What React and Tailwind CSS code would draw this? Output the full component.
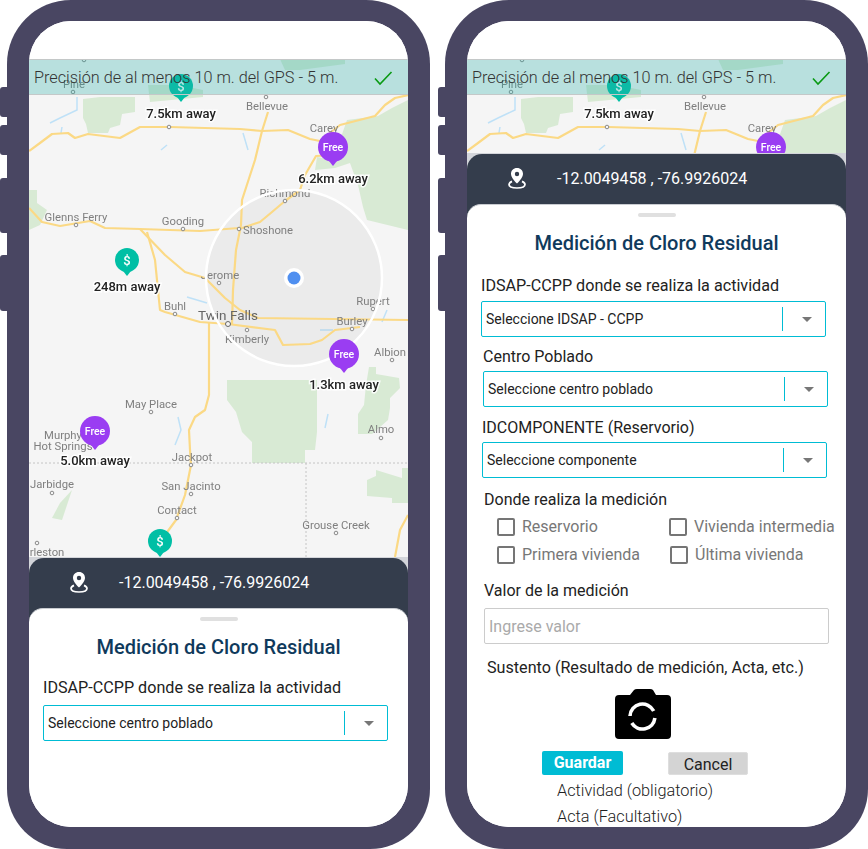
import React from "react";

const greens = [
  "83,99 100,97 135,97 135,112 122,114 120,125 110,128 108,133 88,133 86,124 83,118",
  "29,190 37,190 37,203 47,210 40,225 29,230",
  "408,100 392,108 378,116 347,120 333,160 317,157 315,170 335,168 350,163 358,185 363,207 367,220 408,230",
  "227,380 317,380 317,432 315,450 305,450 305,463 252,463 252,442 242,432 236,412 227,400",
  "369,367 376,367 376,374 399,378 400,388 390,398 390,408 388,420 372,434 358,434 358,414 364,405 366,385",
  "402,468 408,468 408,503 392,503 392,498 367,496 367,480 376,476 376,470 402,478",
  "280,59 345,59 345,64 300,70 285,70",
  "148,85 178,85 203,90 203,97 150,102",
  "60,503 72,490 62,520 52,518",
];

const roads = [
  "M29 151 L40 143 L52 134 L68 133 L75 138 L88 134 L120 138 L140 127 L170 127 L240 129 L262 131 L288 130 L310 139 L320 141 L340 125 L375 116 L385 105 L395 98 L408 95",
  "M268 112 L262 131 L255 160 L242 200 L241 225 L236 250 L233 290 L232 325",
  "M335 155 L316 156 L305 175 L300 190 L285 201 L272 212 L260 222 L239 229",
  "M29 208 L42 222 L60 226 L90 221 L105 228 L140 229 L200 231 L239 228",
  "M140 229 L165 255 L185 272 L205 278 L225 298 L240 310 L258 318 L408 320",
  "M147 232 L155 260 L158 290 L160 310 L165 312 L200 322 L228 324 L275 330 L283 345 L310 344 L322 340 L335 330 L360 327",
  "M209 322 L209 395 L205 410 L195 417 L189 430 L190 450 L191 465 L185 495 L176 520 L165 535",
  "M408 515 L400 530 L395 557",
];

const lakes = [
  "M77 97 L77 110 L60 118 L50 123",
  "M62 127 L61 133",
  "M167 145 L161 150",
  "M243 133 L248 150",
  "M187 297 L207 303",
  "M178 417 L181 430 L175 445",
  "M328 414 L325 428",
  "M320 330 L333 330",
  "M387 310 L382 322",
];

const places = [
  ["Pine", 74, 88], ["Bellevue", 267, 110], ["Carey", 324, 132], ["Richmond", 285, 197],
  ["Glenns Ferry", 76, 221], ["Gooding", 183, 225], ["Jerome", 220, 279], ["Buhl", 175, 310],
  ["Rupert", 373, 305], ["Burley", 352, 325], ["Kimberly", 247, 343], ["Albion", 390, 356],
  ["May Place", 151, 408], ["Murphy", 63, 439], ["Hot Springs", 63, 450], ["Jackpot", 192, 461],
  ["Almo", 381, 433], ["Jarbidge", 52, 488], ["San Jacinto", 191, 490], ["Contact", 177, 514],
  ["Grouse Creek", 336, 529], ["rleston", 47, 556],
];

const dots = [
  [84, 60], [73, 92], [266, 97], [169, 127], [285, 201], [76, 225], [183, 229], [239, 229], [219, 283],
  [175, 314], [373, 309], [352, 329], [247, 330], [392, 360], [151, 412], [191, 465], [381, 438],
  [52, 493], [191, 494], [177, 518], [336, 533], [37, 543],
];

const pins = [
  { x: 181, y: 86, r: 12, color: "#00bfa5", text: "$", label: "7.5km away", ly: 118 },
  { x: 333, y: 147, r: 15, color: "#9a3df2", text: "Free", label: "6.2km away", ly: 183 },
  { x: 127, y: 260, r: 12, color: "#00bfa5", text: "$", label: "248m away", ly: 291 },
  { x: 344, y: 354, r: 15, color: "#9a3df2", text: "Free", label: "1.3km away", ly: 389 },
  { x: 95, y: 431, r: 15, color: "#9a3df2", text: "Free", label: "5.0km away", ly: 465 },
  { x: 160, y: 541, r: 12, color: "#00bfa5", text: "$" },
];

// same drawing for both phones, viewBox uses screenshot coordinates of the first one
function MapDrawing({ maxY = 557 }) {
  return (
    <svg width="379" height="498" viewBox="29 59 379 498" className="block blur-[0.4px]">
      <rect x="29" y="59" width="379" height="498" fill="#f5f5f5" />
      {greens.map((p) => (
        <polygon key={p} points={p} fill="#d8ead4" />
      ))}
      {lakes.map((d) => (
        <path key={d} d={d} fill="none" stroke="#bfe1f7" strokeWidth="1.5" />
      ))}
      <path d="M29 463 H408 M306 463 V557" fill="none" stroke="#c4c4c4" strokeWidth="1" strokeDasharray="2 2" />
      <circle cx="294" cy="278" r="88" fill="#000000" fillOpacity="0.04" />
      {roads.map((d) => (
        <path key={d} d={d} fill="none" stroke="#fbd985" strokeWidth="2.2" strokeLinejoin="round" />
      ))}
      {dots.map(([x, y]) => (
        <circle key={`${x}-${y}`} cx={x} cy={y} r="1.8" fill="#f5f5f5" stroke="#8a8a8a" strokeWidth="1" />
      ))}
      <g fill="#7f7f7f" fontSize="11.3" textAnchor="middle">
        {places.filter((p) => p[2] < maxY).map(([name, x, y]) => (
          <text key={name} x={x} y={y}>{name}</text>
        ))}
      </g>
      {maxY > 300 && (
        <>
          <text x="243" y="234" fill="#7f7f7f" fontSize="11.3">Shoshone</text>
          <text x="228" y="320" fill="#666666" fontSize="13.5" textAnchor="middle">Twin Falls</text>
          <circle cx="228" cy="324" r="2.5" fill="#f5f5f5" stroke="#666666" strokeWidth="1" />
          <circle cx="294" cy="278" r="88" fill="none" stroke="#ffffff" strokeWidth="2.5" />
          <circle cx="294" cy="278" r="10" fill="#ffffff" />
          <circle cx="294" cy="278" r="6.5" fill="#4f8ff0" />
        </>
      )}
      {pins.filter((pin) => pin.y - pin.r < maxY).map((pin) => (
        <g key={`${pin.x}-${pin.y}`} textAnchor="middle">
          <circle cx={pin.x} cy={pin.y} r={pin.r} fill={pin.color} />
          <polygon points={`${pin.x - 4},${pin.y + pin.r - 1} ${pin.x + 4},${pin.y + pin.r - 1} ${pin.x},${pin.y + pin.r + 4}`} fill={pin.color} />
          <text x={pin.x} y={pin.y + (pin.text === "$" ? 5 : 4)} fill="#ffffff" fontSize={pin.text === "$" ? 13 : 10.5} fontWeight="500">{pin.text}</text>
          {pin.label && pin.ly < maxY && (
            <text x={pin.x} y={pin.ly} fill="#222222" fontSize="13" fontWeight="500" stroke="#ffffff" strokeWidth="3" strokeOpacity="0.85" paintOrder="stroke">{pin.label}</text>
          )}
        </g>
      ))}
    </svg>
  );
}

function GpsStatus() {
  return (
    <div className="absolute top-0 left-0 right-0 h-[36px] flex items-center justify-between pl-[5px] pr-[15px] pt-[2px] bg-[#2bb0a8]/30 border-y border-[#c4c8c8] text-[16.25px] font-light text-[#333333]">
      <span>Precisión de al menos 10 m. del GPS - 5 m.</span>
      <svg width="20" height="16" viewBox="0 0 20 16" fill="none">
        <path d="M2 8.5 L7 14 L18.5 2" stroke="#0a9a14" strokeWidth="1.6" />
      </svg>
    </div>
  );
}

function PinIcon() {
  return (
    <svg width="18" height="21" viewBox="0 0 18 21" fill="none">
      <path fillRule="evenodd" d="M9 0 C5.4 0 3 2.6 3 5.8 C3 9 6 12.6 9 15.6 C12 12.6 15 9 15 5.8 C15 2.6 12.6 0 9 0 Z M9 3.8 A2.2 2.2 0 1 1 9 8.2 A2.2 2.2 0 1 1 9 3.8 Z" fill="#ffffff" />
      <path d="M4 13.4 C2.2 14.2 1 15.2 1 16.6 C1 18.8 4.6 20 9 20 C13.4 20 17 18.8 17 16.6 C17 15.2 15.8 14.2 14 13.4" stroke="#ffffff" strokeWidth="1.7" />
    </svg>
  );
}

function CoordsBar() {
  return (
    <div className="bg-[#d3d5da] pt-[1px]">
      <div className="h-[65px] bg-[#343d4c] rounded-t-[15px] flex items-start pt-[13px] pl-[41px] text-white text-[16px]">
        <div className="w-[18px] h-[21px] mt-[1px]">
          <PinIcon />
        </div>
        <span className="ml-[31px] leading-[22px] mt-[1px]">-12.0049458 , -76.9926024</span>
      </div>
    </div>
  );
}

function SelectBox({ text, className }) {
  return (
    <div className={`w-[345px] h-[36px] border border-[#00bcd4] rounded-[2px] flex items-center pl-[4px] text-[14px] text-[#222222] ${className}`}>
      <span className="w-[296px]">{text}</span>
      <span className="w-px h-[24px] bg-[#00bcd4]" />
      <span className="ml-[19px] w-0 h-0 border-x-[5px] border-x-transparent border-t-[5px] border-t-[#777777]" />
    </div>
  );
}

function Sheet({ children, className }) {
  return (
    <div className={`relative -mt-[15px] bg-white rounded-t-[14px] border-t border-[#c9ccd1] ${className}`}>
      <div className="w-[38px] h-[4px] mx-auto mt-[8px] rounded-full bg-[#e0e0e0]" />
      <h2 className="mt-[14px] text-center text-[20px] leading-[24px] font-medium text-[#0f3a5c]">Medición de Cloro Residual</h2>
      {children}
    </div>
  );
}

function Checkbox({ label, className }) {
  return (
    <label className={`flex items-center gap-[7px] text-[16px] leading-[22px] text-[#777777] ${className}`}>
      <span className="w-[18px] h-[18px] rounded-[2px] border-2 border-[#757575]" />
      {label}
    </label>
  );
}

function CameraIcon() {
  return (
    <svg width="56" height="50" viewBox="0 0 56 50" fill="none">
      <path d="M15 6 L19 1 Q20 0 22 0 L35 0 Q37 0 38 1 L41 6 L52 6 Q56 6 56 10 L56 46 Q56 50 52 50 L4 50 Q0 50 0 46 L0 10 Q0 6 4 6 Z" fill="#000000" />
      <path d="M15 27 A12.5 12.5 0 0 1 38.7 22" stroke="#ffffff" strokeWidth="3.6" />
      <path d="M39.9 29 A12.5 12.5 0 0 1 16.8 34" stroke="#ffffff" strokeWidth="3.6" />
    </svg>
  );
}

function SideButtons() {
  return (
    <div className="absolute -left-[7px] top-0 w-[7px]">
      <div className="mt-[87px] h-[30px] bg-[#494662] rounded-l-[3px]" />
      <div className="mt-[8px] h-[30px] bg-[#494662] rounded-l-[3px]" />
      <div className="mt-[23px] h-[55px] bg-[#494662] rounded-l-[3px]" />
      <div className="mt-[22px] h-[56px] bg-[#494662] rounded-l-[3px]" />
    </div>
  );
}

function Phone({ children, className }) {
  return (
    <div className={`relative w-[423px] h-[849px] shrink-0 bg-[#494662] rounded-t-[64px] rounded-b-[60px] pt-[21px] pb-[22px] px-[22px] ${className}`}>
      <SideButtons />
      <div className="h-full w-[379px] bg-white rounded-t-[42px] rounded-b-[42px] overflow-hidden flex flex-col">
        <div className="h-[38px] shrink-0 bg-white" />
        {children}
      </div>
    </div>
  );
}

export default function App() {
  return (
    <div className="w-[868px] h-[849px] overflow-hidden bg-white flex font-['Roboto',sans-serif]">
      <Phone className="ml-[7px]">
        <div className="relative h-[498px] shrink-0 overflow-hidden">
          <MapDrawing />
          <GpsStatus />
        </div>
        <CoordsBar />
        <Sheet className="flex-1">
          <p className="mt-[18px] ml-[14px] text-[16.15px] leading-[22px] text-[#222222]">IDSAP-CCPP donde se realiza la actividad</p>
          <SelectBox text="Seleccione centro poblado" className="mt-[6px] ml-[14px]" />
        </Sheet>
      </Phone>

      <Phone className="ml-[15px]">
        <div className="relative h-[94px] shrink-0 overflow-hidden">
          <MapDrawing maxY={160} />
          <GpsStatus />
        </div>
        <CoordsBar />
        <Sheet className="flex-1 min-h-0 overflow-hidden text-[#222222]">
          <p className="mt-[20px] ml-[14px] text-[16.15px] leading-[22px]">IDSAP-CCPP donde se realiza la actividad</p>
          <SelectBox text="Seleccione IDSAP - CCPP" className="mt-[4px] ml-[14px]" />
          <p className="mt-[9px] ml-[16px] text-[16px] leading-[22px]">Centro Poblado</p>
          <SelectBox text="Seleccione centro poblado" className="mt-[3px] ml-[16px]" />
          <p className="mt-[10px] ml-[15px] text-[16px] leading-[22px]">IDCOMPONENTE (Reservorio)</p>
          <SelectBox text="Seleccione componente" className="mt-[3px] ml-[15px]" />
          <p className="mt-[11px] ml-[17px] text-[16px] leading-[22px]">Donde realiza la medición</p>
          <div className="mt-[5px] ml-[30px] grid grid-cols-[172px_1fr] gap-y-[6px] whitespace-nowrap">
            <Checkbox label="Reservorio" />
            <Checkbox label="Vivienda intermedia" />
            <Checkbox label="Primera vivienda" />
            <Checkbox label="Última vivienda" className="ml-[1px]" />
          </div>
          <p className="mt-[14px] ml-[17px] text-[16px] leading-[22px]">Valor de la medición</p>
          <div className="mt-[6px] ml-[17px] w-[345px] h-[36px] border border-[#cccccc] rounded-[2px] flex items-center pl-[4px] pt-[1px] text-[16px] text-[#aaaaaa]">Ingrese valor</div>
          <p className="mt-[13px] ml-[20px] text-[16.15px] leading-[22px]">Sustento (Resultado de medición, Acta, etc.)</p>
          <div className="mt-[10px] ml-[148px] w-[56px] h-[50px]">
            <CameraIcon />
          </div>
          <div className="mt-[12px] ml-[75px] flex items-center">
            <button className="w-[81px] h-[24px] bg-[#00bcd4] rounded-[2px] text-white text-[16px] font-bold">Guardar</button>
            <button className="ml-[45px] w-[80px] h-[23px] bg-[#d4d4d4] border border-[#dedede] rounded-[2px] pb-[2px] text-[16px] text-[#222222]">Cancel</button>
          </div>
          <p className="mt-[5px] ml-[90px] text-[16.3px] leading-[22px] font-light">Actividad (obligatorio)</p>
          <p className="mt-[4px] ml-[90px] text-[16.3px] leading-[22px] font-light">Acta (Facultativo)</p>
        </Sheet>
      </Phone>
    </div>
  );
}
